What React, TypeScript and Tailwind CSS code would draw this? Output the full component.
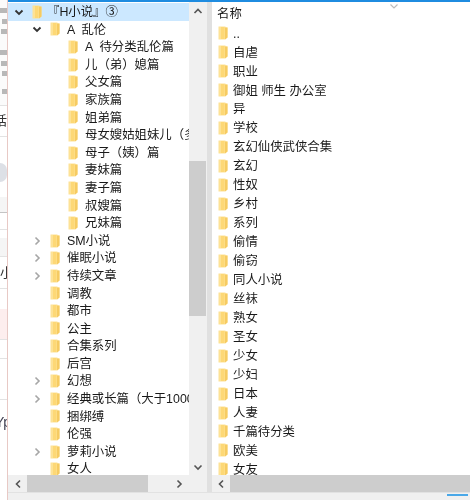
const FONT = 'font-["Liberation_Sans","Noto_Sans_CJK_SC",sans-serif]';

function Folder() {
  return (
    <svg width="10" height="14" viewBox="0 0 10 14" className="shrink-0">
      <path d="M0.5 0.5 H7.5 V1.5 H9.5 V11.5 L7 13.5 H0.5 Z" fill="#fde296" />
      <path d="M7 1.5 H9.5 V11.5 L7 13.5 Z" fill="#f6cb62" />
      <path d="M3 1 H6.5 V13 H3 Z" fill="#fdd876" />
    </svg>
  );
}

function Chevron({ dir, color, w = 1.6 }: { dir: "up" | "down" | "left" | "right"; color: string; w?: number }) {
  const d = {
    up: "M1.5 7 L5 3.5 L8.5 7",
    down: "M1.5 3.5 L5 7 L8.5 3.5",
    left: "M7 1.5 L3.5 5 L7 8.5",
    right: "M3.5 1.5 L7 5 L3.5 8.5",
  }[dir];
  return (
    <svg width="10" height="10" viewBox="0 0 10 10" className="shrink-0">
      <path d={d} fill="none" stroke={color} strokeWidth={w} />
    </svg>
  );
}

type Row = { t: string; lv: number; arrow?: "down" | "right"; sel?: boolean };

const tree: Row[] = [
  { t: "『H小说』③", lv: 0, arrow: "down", sel: true },
  { t: "A  乱伦", lv: 1, arrow: "down" },
  { t: "A  待分类乱伦篇", lv: 2 },
  { t: "儿（弟）媳篇", lv: 2 },
  { t: "父女篇", lv: 2 },
  { t: "家族篇", lv: 2 },
  { t: "姐弟篇", lv: 2 },
  { t: "母女嫂姑姐妹儿（多", lv: 2 },
  { t: "母子（姨）篇", lv: 2 },
  { t: "妻妹篇", lv: 2 },
  { t: "妻子篇", lv: 2 },
  { t: "叔嫂篇", lv: 2 },
  { t: "兄妹篇", lv: 2 },
  { t: "SM小说", lv: 1, arrow: "right" },
  { t: "催眠小说", lv: 1, arrow: "right" },
  { t: "待续文章", lv: 1, arrow: "right" },
  { t: "调教", lv: 1 },
  { t: "都市", lv: 1 },
  { t: "公主", lv: 1 },
  { t: "合集系列", lv: 1 },
  { t: "后宫", lv: 1 },
  { t: "幻想", lv: 1, arrow: "right" },
  { t: "经典或长篇（大于1000", lv: 1, arrow: "right" },
  { t: "捆绑缚", lv: 1 },
  { t: "伦强", lv: 1 },
  { t: "萝莉小说", lv: 1, arrow: "right" },
  { t: "女人", lv: 1 },
];

const files = [
  "..", "自虐", "职业", "御姐 师生 办公室", "异", "学校", "玄幻仙侠武侠合集", "玄幻", "性奴", "乡村", "系列", "偷情",
  "偷窃", "同人小说", "丝袜", "熟女", "圣女", "少女", "少妇", "日本", "人妻", "千篇待分类", "欧美", "女友",
];

function TreeRow({ r }: { r: Row }) {
  const pad = r.lv === 0 ? "pl-[6px]" : r.lv === 1 ? "pl-[24px]" : "pl-[42px]";
  const gap = r.lv === 0 ? "gap-[5px]" : "gap-[7px]";
  return (
    <div className={`flex items-center h-[17.6px] shrink-0 whitespace-nowrap ${pad} ${r.sel ? "bg-[#cce8ff]" : ""}`}>
      <span className="w-[18px] shrink-0 flex items-center">
        {r.arrow ? (
          <Chevron dir={r.arrow} color={r.arrow === "down" ? "#333" : "#a6a6a6"} w={r.arrow === "down" ? 1.8 : 1.6} />
        ) : null}
      </span>
      <span className={`flex items-center ${gap}`}>
        <Folder />
        <span className="whitespace-pre pt-px">{r.t}</span>
      </span>
    </div>
  );
}

function Smudge({ w }: { w: string }) {
  return <div className={`h-[5px] ${w} bg-[#b8b8b8] ml-auto shrink-0`} />;
}

function LeftStrip() {
  return (
    <div className="w-[7px] shrink-0 flex flex-col overflow-hidden bg-white text-[#333] text-[13px]">
      <div className="h-[106px] shrink-0 border-b border-[#e3e3e3] flex flex-col gap-[5.5px] pt-[8px] bg-[#fbfbfb]">
        <Smudge w="w-[7px]" />
        <Smudge w="w-[5px]" />
        <Smudge w="w-[6px]" />
        <div className="h-[5px] shrink-0" />
        <Smudge w="w-[7px]" />
        <Smudge w="w-[6px]" />
        <Smudge w="w-[5px]" />
        <div className="h-[2px] shrink-0" />
        <Smudge w="w-[5px]" />
      </div>
      <div className="h-[31px] shrink-0 border-b border-[#e3e3e3] flex items-center justify-end">
        <span className="shrink-0">话</span>
      </div>
      <div className="h-[26px] shrink-0" />
      <div className="h-[19px] shrink-0 bg-[#dde0e6] rounded-r-[8px]" />
      <div className="h-[15px] shrink-0" />
      <div className="h-[16px] shrink-0 border-b border-[#c4c4c4] bg-[#f5f5f5]" />
      <div className="h-[17px] shrink-0 border-b border-[#e3e3e3]" />
      <div className="h-[8px] shrink-0" />
      <div className="h-[19px] shrink-0 border-b border-[#e3e3e3] bg-[#f5f5f5]" />
      <div className="h-[32px] shrink-0 border-b border-[#e3e3e3] flex items-center justify-start">
        <span className="shrink-0">小</span>
      </div>
      <div className="h-[20px] shrink-0" />
      <div className="h-[31px] shrink-0 bg-[#fdeeee] border-b border-[#e3e3e3]" />
      <div className="h-[19px] shrink-0 border-b border-[#e3e3e3]" />
      <div className="h-[41px] shrink-0 border-b border-[#e3e3e3]" />
      <div className="h-[44px] shrink-0 flex items-center justify-start text-[#445] text-[14px]">
        <span className="shrink-0 -ml-[5px]">Yp</span>
      </div>
      <div className="grow" />
    </div>
  );
}

export default function App() {
  return (
    <div className={`${FONT} w-[470px] h-[500px] flex overflow-hidden bg-white text-[12.4px] text-[#1a1a1a] blur-[0.45px]`}>
      <LeftStrip />
      <div className="w-px shrink-0 bg-[#e8c9c5]" />
      <div className="flex-1 min-w-0 flex flex-col">
        <div className="h-[2px] shrink-0 bg-[#1f8ce0]" />
        <div className="flex-1 min-h-0 flex">
          {/* Tree pane */}
          <div className="w-[198px] shrink-0 flex flex-col">
            <div className="flex-1 min-h-0 flex">
              <div className="w-[181px] shrink-0 flex flex-col overflow-hidden pt-px">
                {tree.map((r, i) => (
                  <TreeRow key={i} r={r} />
                ))}
              </div>
              <div className="w-[17px] shrink-0 flex flex-col bg-[#f0f0f0]">
                <div className="h-[17px] shrink-0 flex items-center justify-center">
                  <Chevron dir="up" color="#555" />
                </div>
                <div className="h-[142px] shrink-0" />
                <div className="h-[155px] shrink-0 bg-[#cdcdcd]" />
                <div className="grow" />
                <div className="h-[17px] shrink-0 flex items-center justify-center">
                  <Chevron dir="down" color="#555" />
                </div>
              </div>
            </div>
            <div className="h-[17px] shrink-0 flex bg-[#f0f0f0]">
              <div className="w-[19px] shrink-0 flex items-center justify-center">
                <Chevron dir="left" color="#555" />
              </div>
              <div className="w-[121px] shrink-0 bg-[#cdcdcd]" />
              <div className="w-[41px] shrink-0 flex items-center justify-end pr-[5px]">
                <Chevron dir="right" color="#555" />
              </div>
              <div className="grow" />
            </div>
          </div>
          {/* Splitter */}
          <div className="w-[6px] shrink-0 bg-[#e0e0e0] border-l border-[#f0f0f0]" />
          {/* File list */}
          <div className="flex-1 min-w-0 flex flex-col">
            <div className="h-[22px] shrink-0 relative flex items-center pl-[5px] pt-[2px]">
              名称
              <span className="absolute left-[177px] top-[-1px]">
                <Chevron dir="down" color="#bcbcbc" w={1.2} />
              </span>
            </div>
            <div className="flex-1 min-h-0 flex flex-col overflow-hidden">
              {files.map((f) => (
                <div key={f} className="h-[18.96px] shrink-0 flex items-center gap-[5px] pl-[6px] whitespace-nowrap">
                  <Folder />
                  <span className="pt-px">{f}</span>
                </div>
              ))}
            </div>
            <div className="h-[17px] shrink-0 flex bg-[#f0f0f0]">
              <div className="w-[18px] shrink-0 flex items-center justify-center">
                <Chevron dir="left" color="#555" />
              </div>
              <div className="grow bg-[#cdcdcd]" />
            </div>
          </div>
        </div>
        <div className="h-[8px] shrink-0 bg-[#f0f0f0] border-t border-[#e2e2e2] flex justify-end pr-[2px]">
          <div className="w-[21px] h-[2px] mt-[1px] bg-[#4aa8e8]" />
        </div>
      </div>
    </div>
  );
}
